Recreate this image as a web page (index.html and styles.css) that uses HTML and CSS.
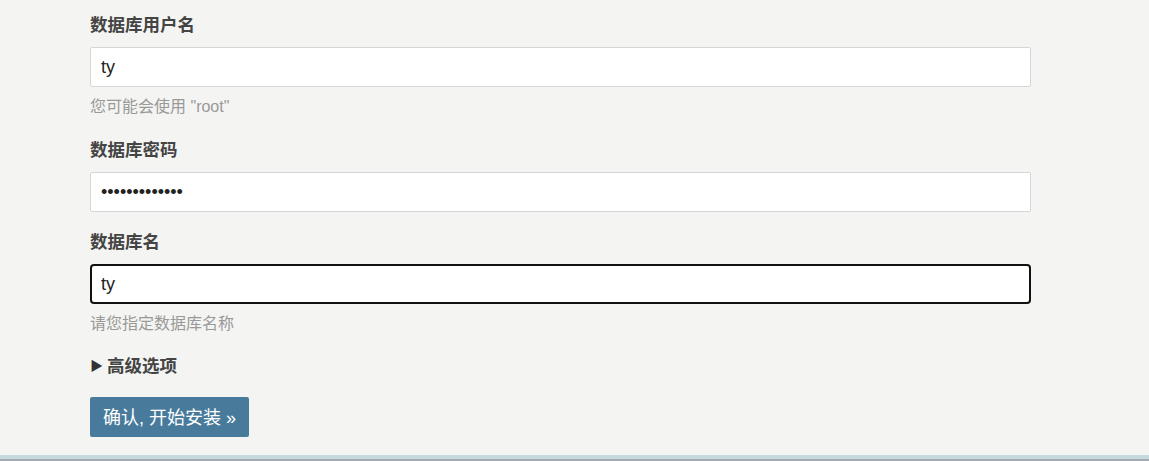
FILE: index.html
```html
<!DOCTYPE html>
<html lang="zh-CN">
<head>
<meta charset="utf-8">
<title>安装</title>
<link rel="stylesheet" href="styles.css">
</head>
<body>
<div class="page">
  <form class="form">
    <div class="field">
      <label class="label">数据库用户名</label>
      <input class="input" type="text" value="ty">
      <p class="hint">您可能会使用 "root"</p>
    </div>
    <div class="field">
      <label class="label">数据库密码</label>
      <input class="input" type="password" value="1234567890123">
    </div>
    <div class="field">
      <label class="label">数据库名</label>
      <input class="input focused" type="text" value="ty">
      <p class="hint">请您指定数据库名称</p>
    </div>
    <div class="advanced"><span class="tri">&#9654;</span><span>高级选项</span></div>
    <div class="actions"><button type="button" class="btn">确认, 开始安装 »</button></div>
  </form>
  <div class="footer-line"></div>
</div>
</body>
</html>
```
FILE: styles.css
```css
html, body {
  margin: 0;
  padding: 0;
  background: #f4f4f2;
  font-family: "Liberation Sans", "Noto Sans CJK SC", sans-serif;
  color: #444;
}
.page {
  height: 461px;
  display: flex;
  flex-direction: column;
}
.form {
  flex: 1;
  padding: 13px 0 0 90px;
  width: 941px;
  display: flex;
  flex-direction: column;
}
.field {
  display: flex;
  flex-direction: column;
}
.field + .field {
  margin-top: 18px;
}
.label {
  font-size: 17.5px;
  font-weight: bold;
  color: #444;
  line-height: 24px;
  height: 24px;
  margin-bottom: 10px;
}
.input {
  box-sizing: border-box;
  height: 40px;
  width: 941px;
  border: 1px solid #d6d6d6;
  border-radius: 2px;
  background: #fff;
  padding: 0 10px;
  font-family: "Liberation Sans", "Noto Sans CJK SC", sans-serif;
  font-size: 18px;
  color: #222;
  outline: none;
  margin: 0;
}
.input.focused {
  border: 2px solid #111;
  border-radius: 4px;
  padding: 0 9px;
}
.hint {
  margin: 9px 0 2px 0;
  font-size: 16px;
  line-height: 22px;
  color: #999;
}
.advanced {
  display: flex;
  align-items: center;
  font-size: 17.5px;
  font-weight: bold;
  color: #444;
  line-height: 24px;
  margin-top: 17px;
}
.tri {
  font-size: 13px;
  width: 17px;
  color: #333;
}
.actions {
  margin-top: 19px;
}
.btn {
  background: #487b9b;
  color: #fff;
  border: none;
  border-radius: 2px;
  height: 40px;
  width: 159px;
  padding: 0 0 3px 0;
  font-family: "Liberation Sans", "Noto Sans CJK SC", sans-serif;
  font-size: 18px;
  font-weight: normal;
}
.footer-line {
  height: 4px;
  background: #c6dadc;
  border-bottom: 2px solid #a3aab2;
}
```
